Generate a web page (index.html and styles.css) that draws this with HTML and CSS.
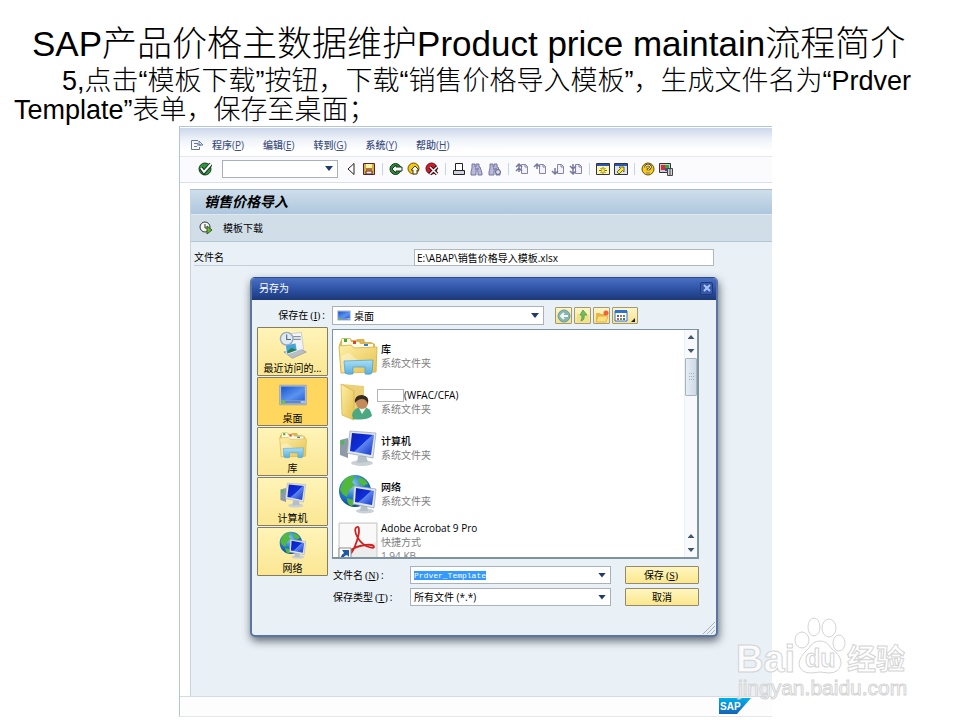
FILE: index.html
```html
<!DOCTYPE html>
<html lang="zh-CN">
<head>
    <meta charset="UTF-8">
    <meta name="viewport" content="width=device-width, initial-scale=1.0">
    <title>SAP产品价格主数据维护</title>
    <link rel="stylesheet" href="styles.css">
</head>
<body>
    <!-- shared icons -->
    <svg class="defs" width="0" height="0" aria-hidden="true">
        <defs>
            <linearGradient id="screen" x1="0" y1="0" x2="1" y2="1">
                <stop offset="0" stop-color="#0a1fb4"/><stop offset=".5" stop-color="#1030dc"/><stop offset=".52" stop-color="#5f86f0"/><stop offset="1" stop-color="#0f2fc8"/>
            </linearGradient>
            <linearGradient id="desk" x1="0" y1="0" x2="1" y2="1">
                <stop offset="0" stop-color="#1a55cc"/><stop offset=".6" stop-color="#5b93ee"/><stop offset="1" stop-color="#2a62d8"/>
            </linearGradient>
            <linearGradient id="folder" x1="0" y1="0" x2="1" y2="1">
                <stop offset="0" stop-color="#fdf0a8"/><stop offset="1" stop-color="#e6c04c"/>
            </linearGradient>
            <linearGradient id="glass" x1="0" y1="0" x2="0" y2="1">
                <stop offset="0" stop-color="#a9def5"/><stop offset="1" stop-color="#58aee0"/>
            </linearGradient>
            <radialGradient id="globe" cx=".4" cy=".3" r=".8">
                <stop offset="0" stop-color="#8fd0f8"/><stop offset=".5" stop-color="#2277cc"/><stop offset="1" stop-color="#0b3a86"/>
            </radialGradient>
            <linearGradient id="sapblue" x1="0" y1="0" x2="0" y2="1">
                <stop offset="0" stop-color="#00b0ea"/><stop offset="1" stop-color="#1463b8"/>
            </linearGradient>
        </defs>
        <symbol id="i-library" viewBox="0 0 40 40">
            <path d="M3 4l1-2h8l2 2h4l1-1h7l1 3h6l4 2v4l2 1-1 23-34 1L1 9z" fill="#d9b556"/>
            <path d="M4 3h8l1 3h8l1 2h13v6H4z" fill="#fffbe6"/>
            <path d="M6 3h3v3H6z" fill="#2fae3c"/><path d="M15 5h3v3h-3z" fill="#e0452c"/><path d="M26 8h4v2h-4z" fill="#2e7fd8"/>
            <path d="M1 10l12-1 3 3 23-1-1 25-35 1z" fill="url(#folder)" stroke="#dcbc5c"/>
            <path d="M3 20l8-3 10 8-9 11H4z" fill="#fff" opacity=".35"/>
            <path d="M6 25l29-1-1 13q-1 2-7 1v-7H15v7q-6 1-8-1z" fill="url(#glass)" stroke="#4b9ecb" stroke-width=".7"/>
        </symbol>
        <symbol id="i-user" viewBox="0 0 40 40">
            <path d="M4 2l22 2v30l-12 2z" fill="#ecd078"/>
            <path d="M3 2l13 7v29L4 33z" fill="url(#folder)" stroke="#d2ad48" stroke-width=".7"/>
            <path d="M14 33q2-8 10-8 9 0 10 9-6 5-19 3z" fill="#4ca880"/>
            <path d="M21 26l3 6 4-6z" fill="#eef6ee"/>
            <circle cx="24" cy="21" r="6" fill="#c48a5a"/>
            <path d="M17 21q-1-8 7-8 8 1 6 9-2-5-6-5-4 0-7 4z" fill="#332a22"/>
        </symbol>
        <symbol id="i-computer" viewBox="0 0 40 40">
            <ellipse cx="24" cy="35" rx="11" ry="3" fill="#c9d0d6"/>
            <path d="M2 12l8-2v20l-8-3z" fill="#8e9aa5"/><path d="M3 13l3-1v4l-3 1z" fill="#3bc052"/>
            <path d="M20 28h8l2 6-11 1z" fill="#b6bfc8"/>
            <path d="M12 3l26 2-3 25-26-5z" fill="#dde4ea" stroke="#98a3ae" stroke-width=".7"/>
            <path d="M14 5l22 2-3 20-21-4z" fill="url(#screen)"/>
        </symbol>
        <symbol id="i-network" viewBox="0 0 40 40">
            <circle cx="17" cy="17" r="16" fill="url(#globe)"/>
            <path d="M6 6q6-6 11-3l-3 5 3 3-6 5-2 7q-6-3-7-8zM21 3q7 2 9 7l-5 2-5-4zM9 24l6 2 1 5-3 1q-4-2-4-8z" fill="#51b83c"/>
            <ellipse cx="27" cy="37" rx="9" ry="2.500" fill="#c9d0d6"/>
            <path d="M23 31h6l1 6h-8z" fill="#b6bfc8"/>
            <path d="M16 12l22 3-2 19-21-4z" fill="#dde4ea" stroke="#98a3ae" stroke-width=".7"/>
            <path d="M18 14l18 3-2 14-17-3z" fill="url(#screen)"/>
        </symbol>
        <symbol id="i-desktop" viewBox="0 0 40 32">
            <path d="M1 2h38v28H1z" fill="#b8c6dc" stroke="#8795b0"/>
            <path d="M3 4h34v20H3z" fill="url(#desk)"/>
            <path d="M3 24h34v4H3z" fill="#5f86c8"/>
            <circle cx="6" cy="26" r="3" fill="#6cc04a"/><path d="M31 25h6v2h-6z" fill="#c4d8f4"/>
        </symbol>
        <symbol id="i-recent" viewBox="0 0 40 40">
            <path d="M7 30l20-6 12 6-20 9z" fill="#b9bec5" stroke="#8f979f"/>
            <path d="M14 4l18-2 3 24-17 4z" fill="#f1f3f6" stroke="#b9c1ca"/>
            <path d="M19 8h12M20 12h11" stroke="#8896a6" stroke-width="2"/>
            <path d="M9 20l15-3 2 11-15 5z" fill="#44a4dc" stroke="#fff"/><path d="M12 29l6-5 7 3-13 5z" fill="#2b7d4a"/>
            <circle cx="11" cy="11" r="9" fill="#dfe9f2" stroke="#97a8ba" stroke-width="2"/>
            <path d="M11 5v7h6" fill="none" stroke="#50657c" stroke-width="1.500"/>
        </symbol>
        <symbol id="i-acrobat" viewBox="0 0 40 40">
            <path d="M1 1h38v38H1z" fill="#ececec" stroke="#c8c8c8"/>
            <path d="M2 2h36v18L2 32z" fill="#fff" opacity=".7"/>
            <path d="M19 5q-3 1-1 7 3 8 10 12 7 3 8 1 0-3-9-2-8 1-14 5-4 3-2 4 3 0 6-8 4-10 4-15 0-5-2-4z" fill="none" stroke="#d2201f" stroke-width="1.800"/>
            <path d="M1 26h12v14H1z" fill="#fff" stroke="#8a8a8a"/>
            <path d="M4 28h7v7l-2-2q-4 1-4 5H3q-1-5 3-7z" fill="#1f5aa8"/>
        </symbol>
        <symbol id="i-bin" viewBox="0 0 14 14">
            <path d="M2 2h3v3h1V2h3v3h1l2 6v2H8V9H6v4H1v-3l1-4z" fill="#b9b8dc" stroke="#77779f"/><path d="M5 6h4v2H5z" fill="#8d8cb4"/>
        </symbol>
        <symbol id="i-page" viewBox="0 0 14 14">
            <path d="M6.500 2.500h4l2 2v7h-6z" fill="#f4f3fb" stroke="#8584ad"/><path d="M10 2v3h3" fill="none" stroke="#8584ad"/>
        </symbol>
    </svg>

    <main class="slide">
        <h1>SAP产品价格主数据维护Product price maintain流程简介</h1>
        <p class="step">5,点击“模板下载”按钮，下载“销售价格导入模板”，生成文件名为“Prdver Template”表单，保存至桌面；</p>

        <section class="sap">
            <nav class="menubar">
                <svg class="menu-icon" viewBox="0 0 14 12"><path d="M8 1.500H1.500v9h8V8M4 4.500h4M4 7.500h3M7 6h4" fill="none" stroke="#6376a0"/><path d="M9 2l4 4H9z" fill="none" stroke="#6376a0"/></svg>
                <a href="#">程序(<u>P</u>)</a>
                <a href="#">编辑(<u>E</u>)</a>
                <a href="#">转到(<u>G</u>)</a>
                <a href="#">系统(<u>Y</u>)</a>
                <a href="#">帮助(<u>H</u>)</a>
            </nav>

            <div class="toolbar">
                <button class="tool enter" aria-label="Enter"><svg viewBox="0 0 14 14"><circle cx="7" cy="7" r="6" fill="#2c9a3c" stroke="#163d1b"/><path d="M3 6l3 4 7-8" fill="none" stroke="#12301a" stroke-width="4"/><path d="M3 6l3 4 7-8" fill="none" stroke="#fff" stroke-width="2"/></svg></button>
                <div class="combo command">
                    <input type="text" aria-label="Command">
                    <button class="caret" aria-label="Open"></button>
                </div>
                <button class="tool" aria-label="Collapse"><svg viewBox="0 0 14 14"><path d="M10 1.500v11L4 7z" fill="#fff" stroke="#222"/></svg></button>
                <button class="tool" aria-label="Save"><svg viewBox="0 0 14 14"><path d="M1.500 1.500h11v11h-11z" fill="#d8a93c" stroke="#5a2330"/><path d="M4 2h6v4H4z" fill="#fff3a8"/><path d="M4 9h6v3H4z" fill="#f5f0ea" stroke="#5a2330"/><path d="M4 7h6" stroke="#9c3a34"/></svg></button>
                <span class="sep"></span>
                <button class="tool" aria-label="Back"><svg viewBox="0 0 14 14"><circle cx="6.500" cy="7" r="5.500" fill="#2b8c38" stroke="#14361a"/><path d="M3 7l4-4v2h6v4H7v2z" fill="#fff" stroke="#14361a"/></svg></button>
                <button class="tool" aria-label="Exit"><svg viewBox="0 0 14 14"><circle cx="6.500" cy="6.500" r="5.500" fill="#f3c90c" stroke="#6a520a"/><path d="M8 4l4 4h-2v4H6V8H4z" fill="#fff" stroke="#4a3b10"/></svg></button>
                <button class="tool" aria-label="Cancel"><svg viewBox="0 0 14 14"><circle cx="6.500" cy="6.500" r="5.500" fill="#d3192b" stroke="#5c0c14"/><path d="M5 5l7 7M12 5l-7 7" stroke="#3a0b10" stroke-width="3.500"/><path d="M5 5l7 7M12 5l-7 7" stroke="#fff" stroke-width="1.500"/></svg></button>
                <span class="sep"></span>
                <button class="tool" aria-label="Print"><svg viewBox="0 0 14 14"><path d="M3.500 1.500h7v7h-7z" fill="#fff" stroke="#222"/><path d="M1.500 8.500h11v4h-11z" fill="#cfd2dc" stroke="#222"/></svg></button>
                <button class="tool" aria-label="Find"><svg viewBox="0 0 14 14"><use href="#i-bin"/></svg></button>
                <button class="tool" aria-label="Find next"><svg viewBox="0 0 14 14"><use href="#i-bin"/><path d="M10 7v6M7 10h6" stroke="#77779f" stroke-width="3"/><path d="M10 8v4M8 10h4" stroke="#fff"/></svg></button>
                <span class="sep"></span>
                <button class="tool" aria-label="First page"><svg viewBox="0 0 14 14"><use href="#i-page"/><path d="M1 5l3-3 3 3M1 9l3-3 3 3M4 2v8" fill="none" stroke="#77779f" stroke-width="1.500"/></svg></button>
                <button class="tool" aria-label="Previous page"><svg viewBox="0 0 14 14"><use href="#i-page"/><path d="M1 5l3-3 3 3M4 2v5" fill="none" stroke="#77779f" stroke-width="1.500"/></svg></button>
                <button class="tool" aria-label="Next page"><svg viewBox="0 0 14 14"><use href="#i-page"/><path d="M1 9l3 3 3-3M4 6v6" fill="none" stroke="#77779f" stroke-width="1.500"/></svg></button>
                <button class="tool" aria-label="Last page"><svg viewBox="0 0 14 14"><use href="#i-page"/><path d="M1 4l3 3 3-3M1 9l3 3 3-3M4 2v10" fill="none" stroke="#77779f" stroke-width="1.500"/></svg></button>
                <span class="sep"></span>
                <button class="tool" aria-label="New session"><svg viewBox="0 0 14 14"><path d="M.500 1.500h13v11H.500z" fill="#fbf6b4" stroke="#333"/><path d="M1 2h12v2H1z" fill="#2a56b8"/><path d="M7 5v7M3 8.500h8M4.500 6l5 5M9.500 6l-5 5" stroke="#7a6d10"/><circle cx="7" cy="8.500" r="1.500" fill="#ffe92a"/></svg></button>
                <button class="tool" aria-label="Shortcut"><svg viewBox="0 0 14 14"><path d="M.500 1.500h13v11H.500z" fill="#dbe5f2" stroke="#333"/><path d="M1 2h12v2H1z" fill="#2a56b8"/><path d="M5 5h5v5L8.500 8.500 5 12l-2-2 3.500-3.500z" fill="#ffe92a" stroke="#4d460c" stroke-width=".8"/></svg></button>
                <span class="sep"></span>
                <button class="tool" aria-label="Help"><svg viewBox="0 0 14 14"><circle cx="7" cy="7" r="6" fill="#f6cb1c" stroke="#6a520a"/><path d="M4.500 5.500q0-2.500 2.500-2.500t2.500 2q0 1.500-2.500 2.500v1M7 10v2" fill="none" stroke="#5a4108" stroke-width="2.500"/><path d="M4.500 5.500q0-2.500 2.500-2.500t2.500 2q0 1.500-2.500 2.500v1M7 10v2" fill="none" stroke="#fff"/></svg></button>
                <button class="tool" aria-label="Layout"><svg viewBox="0 0 14 14"><path d="M.500 1.500h11v9H.500z" fill="#c9ccd2" stroke="#333"/><path d="M2 3h4v5H2z" fill="#e0262d"/><path d="M6 3h4v3H6z" fill="#2eaa3a"/><path d="M6 6h3v3H6z" fill="#2b50c0"/><path d="M8.500 6.500h5v7h-5z" fill="#d4d4d4" stroke="#444"/><path d="M10 8h2M10 10h2M10 12h2" stroke="#444"/></svg></button>
            </div>

            <div class="app">
                <h2>销售价格导入</h2>
                <div class="actions">
                    <button class="action">
                        <svg viewBox="0 0 14 14"><circle cx="6" cy="6" r="5" fill="#f4f6f2" stroke="#333"/><path d="M6 3v4h3" fill="none" stroke="#333"/><path d="M8 5l5 4-5 4z" fill="#6bb53a" stroke="#2f5a18"/></svg>
                        模板下载
                    </button>
                </div>

                <div class="content">
                    <div class="field">
                        <label for="path">文件名</label>
                        <input id="path" type="text" value="E:\ABAP\销售价格导入模板.xlsx">
                    </div>

                    <div class="dialog" role="dialog" aria-labelledby="dialog-title">
                        <div class="titlebar">
                            <span id="dialog-title">另存为</span>
                            <button class="close" aria-label="Close"><svg viewBox="0 0 8 8"><path d="M1 1l6 6M7 1L1 7" stroke="#a9c4ff" stroke-width="2"/></svg></button>
                        </div>

                        <div class="dialog-body">
                            <div class="lookin">
                                <label for="folder-select">保存在<span class="key">(<u>I</u>)</span>:</label>
                                <div class="combo">
                                    <svg class="combo-icon" viewBox="0 0 40 32"><use href="#i-desktop"/></svg>
                                    <select id="folder-select"><option>桌面</option></select>
                                    <span class="caret"></span>
                                </div>
                                <div class="nav-buttons">
                                    <button aria-label="Back"><svg viewBox="0 0 14 14"><circle cx="7" cy="7" r="6" fill="#86b4b0" stroke="#6d9a98"/><path d="M11 7H4M7 4L4 7l3 3" fill="none" stroke="#eef6f4" stroke-width="2"/></svg></button>
                                    <button aria-label="Up"><svg viewBox="0 0 14 14"><path d="M1 5h4l1 1h7v7H1z" fill="#f2df8a"/><path d="M5 12q4-1 3-6h3L7 1 4 6h2q0 4-1 6z" fill="#74c060" stroke="#4e9c46" stroke-width=".8"/></svg></button>
                                    <button aria-label="New folder"><svg viewBox="0 0 14 14"><path d="M1 4h4l1 1h5v7H1z" fill="#e8b84c"/><path d="M3 7h10l-2 6H1z" fill="#fbdf7c" stroke="#d8a33a" stroke-width=".7"/><circle cx="11" cy="4" r="2.500" fill="#f0603a"/></svg></button>
                                    <button class="views" aria-label="Views"><svg viewBox="0 0 22 14"><path d="M1 2h12v10H1z" fill="#fff" stroke="#2a72d4"/><path d="M1 1h12v3H1z" fill="#2a72d4"/><path d="M3 6h2v2H3zM9 9h2v2H9z" fill="#3a69c8"/><path d="M6 6h2v2H6zM3 9h2v2H3z" fill="#d85a4a"/><path d="M9 6h2v2H9zM6 9h2v2H6z" fill="#4aa04a"/><path d="M21 9v4h-4z" fill="#222"/></svg></button>
                                </div>
                            </div>

                            <div class="places">
                                <button><svg viewBox="0 0 40 40"><use href="#i-recent"/></svg>最近访问的...</button>
                                <button class="active"><svg viewBox="0 0 40 32"><use href="#i-desktop"/></svg>桌面</button>
                                <button><svg viewBox="0 0 40 40"><use href="#i-library"/></svg>库</button>
                                <button><svg viewBox="0 0 40 40"><use href="#i-computer"/></svg>计算机</button>
                                <button><svg viewBox="0 0 40 40"><use href="#i-network"/></svg>网络</button>
                            </div>

                            <div class="main">
                                <div class="listbox">
                                    <ul class="files">
                                        <li><svg viewBox="0 0 40 40"><use href="#i-library"/></svg><div><b>库</b><span>系统文件夹</span></div></li>
                                        <li><svg viewBox="0 0 40 40"><use href="#i-user"/></svg><div><b><i class="mask"></i>(WFAC/CFA)</b><span>系统文件夹</span></div></li>
                                        <li><svg viewBox="0 0 40 40"><use href="#i-computer"/></svg><div><b>计算机</b><span>系统文件夹</span></div></li>
                                        <li><svg viewBox="0 0 40 40"><use href="#i-network"/></svg><div><b>网络</b><span>系统文件夹</span></div></li>
                                        <li><svg viewBox="0 0 40 40"><use href="#i-acrobat"/></svg><div><b>Adobe Acrobat 9 Pro</b><span>快捷方式</span><span>1.94 KB</span></div></li>
                                    </ul>
                                    <div class="scrollbar">
                                        <span class="arrow up"></span>
                                        <span class="arrow down"></span>
                                        <span class="thumb"></span>
                                        <span class="arrow up end"></span>
                                        <span class="arrow down"></span>
                                    </div>
                                </div>

                                <div class="save-form">
                                    <label for="filename">文件名<span class="key">(<u>N</u>)</span>:</label>
                                    <div class="combo">
                                        <input id="filename" type="text" value="Prdver_Template">
                                        <button class="caret" aria-label="Open"></button>
                                    </div>
                                    <button class="btn">保存<span class="key">(<u>S</u>)</span></button>
                                    <label for="filetype">保存类型<span class="key">(<u>T</u>)</span>:</label>
                                    <div class="combo">
                                        <select id="filetype"><option>所有文件 (*.*)</option></select>
                                        <span class="caret"></span>
                                    </div>
                                    <button class="btn">取消</button>
                                </div>
                            </div>
                        </div>
                        <svg class="grip" viewBox="0 0 12 12"><path d="M0 12L12 0M4 12l8-8M8 12l4-4" stroke="#a4b2c2"/></svg>
                    </div>
                </div>
            </div>

            <footer class="statusbar">
                <svg class="sap-logo" viewBox="0 0 32 16"><path d="M0 0h32L18 16H0z" fill="url(#sapblue)"/><text x="1" y="12">SAP</text></svg>
            </footer>
        </section>

        <svg class="watermark" viewBox="0 0 176 88" aria-hidden="true">
            <text class="big" x="1" y="56">Bai</text>
            <ellipse cx="67" cy="24" rx="7" ry="8"/>
            <ellipse cx="79" cy="11" rx="6" ry="9"/>
            <ellipse cx="94" cy="12" rx="7" ry="9"/>
            <ellipse cx="104" cy="27" rx="6" ry="8"/>
            <path d="M85 25q7 0 11 7 11 8 10 16-2 9-12 9-9-2-18 0-11 0-12-9 0-7 10-16 4-7 11-7z"/>
            <text class="du" x="70" y="51">du</text>
            <text class="cjk" x="112" y="54">经验</text>
            <text class="url" x="3" y="79">jingyan.baidu.com</text>
        </svg>
    </main>

    <script>
        // the suggested name starts out selected, ready to be typed over
        const filename = document.getElementById("filename");
        filename.focus();
        filename.select();
    </script>
</body>
</html>
```
FILE: styles.css
```css
* {
    box-sizing: border-box;
}
body {
    margin: 0;
    background: #fff;
    color: #000;
    font-family: "Liberation Sans", "Noto Sans CJK SC", sans-serif;
}
.defs {
    position: absolute;
}
.slide {
    position: relative;
    min-height: 100vh;
    padding: 24px 0 4px;
}
h1 {
    margin: 0 0 3px;
    padding-left: 32px;
    font-size: 35px;
    line-height: 40px;
    font-weight: 300;
}
.step {
    margin: 0 40px 1px 14px;
    font-size: 27px;
    line-height: 29px;
    font-weight: 300;
    text-indent: 48px;
}

/* SAP window */
.sap {
    margin: 0 188px 0 179px;
    border: 1px solid #b3c5dd;
    border-right: 0;
    border-bottom-color: #e4e8ec;
    font-family: "Open Sans", "Noto Sans CJK SC", sans-serif;
    font-size: 10px;
    line-height: 14px;
}
.sap button,
.sap input,
.sap select {
    margin: 0;
    padding: 0;
    border: 0;
    outline: 0;
    border-radius: 0;
    background: none;
    font: inherit;
    color: inherit;
    appearance: none;
}
.sap svg {
    display: block;
    flex: none;
}
.menubar {
    display: flex;
    align-items: center;
    gap: 19px;
    height: 30px;
    padding: 6px 10px 0;
    border-top: 1px solid #fff;
    border-bottom: 1px solid #e3e8f0;
    background: linear-gradient(#ccd7ea, #eef2f8 40%, #fff 80%);
}
.menubar a {
    color: #3c4f80;
    font-weight: 500;
    text-decoration: none;
}
.menubar .menu-icon {
    width: 14px;
    height: 12px;
    margin-right: -11px;
}
.toolbar {
    display: flex;
    align-items: center;
    gap: 4px;
    height: 26px;
    padding: 0 18px 2px;
    border-bottom: 1px solid #d9e0ea;
    background: #fbfbfd;
}
.tool,
.tool svg {
    width: 14px;
    height: 14px;
}
.sep {
    width: 5px;
    height: 12px;
    background: linear-gradient(#c2d6e4, #c2d6e4) center / 1px 100% no-repeat;
}
.combo {
    display: flex;
    align-items: center;
    height: 18px;
    border: 1px solid #a9b2ba;
    background: #fff;
}
.combo input,
.combo select {
    flex: 1;
    min-width: 0;
    height: 16px;
    padding-left: 3px;
}
.combo .caret {
    width: 8px;
    height: 5px;
    margin-right: 4px;
    background: #1f3a6c;
    clip-path: polygon(0 0, 100% 0, 50% 100%);
    pointer-events: none;
}
.command {
    width: 116px;
    margin: 0 2px 0 6px;
}
.app {
    margin: 6px 0 0 10px;
    border-top: 1px solid #a9b9cc;
    border-left: 1px solid #c8d4e0;
}
h2 {
    margin: 0;
    padding-left: 13px;
    font-size: 14px;
    line-height: 24px;
    font-style: italic;
    font-weight: bold;
    border-bottom: 1px solid #dfe9f1;
    background: linear-gradient(#cedeeb, #aec7dd);
}
.actions {
    height: 27px;
    padding: 6px 8px;
    border-bottom: 1px solid #b3c4d2;
    background: #d1dee8;
}
.action {
    display: flex;
    align-items: center;
    gap: 10px;
}
.action svg {
    width: 14px;
    height: 14px;
}
.content {
    padding: 7px 54px 59px 3px;
    background: #e9f0f6;
}
.field {
    display: flex;
    align-items: center;
    margin-right: 4px;
}
.field label {
    flex: 1;
    height: 16px;
    border-bottom: 1px solid #c3ced8;
}
.field input {
    width: 300px;
    height: 17px;
    padding-left: 2px;
    border: 1px solid #b0b7bd;
    background: #fff;
}

/* save dialog */
.dialog {
    position: relative;
    margin: 11px 0 0 56px;
    border: 2px solid #5a74a4;
    border-top: 1px solid #2c4a8c;
    border-radius: 5px;
    background: #e9f0f6;
    box-shadow: 1px 4px 8px rgba(40, 50, 60, 0.7);
}
.titlebar {
    display: flex;
    align-items: center;
    justify-content: space-between;
    height: 22px;
    padding: 0 3px 2px 7px;
    border-radius: 3px 3px 0 0;
    background: linear-gradient(#4a70c4, #2a4d9e 60%, #1c3878);
    color: #fff;
}
.sap .close {
    display: grid;
    place-items: center;
    width: 13px;
    height: 13px;
    border: 1px solid #1c3a82;
    border-radius: 2px;
    background: #3658a6;
}
.close svg {
    width: 8px;
    height: 8px;
}
.dialog-body {
    display: grid;
    grid-template-columns: 71px 1fr;
    column-gap: 4px;
    row-gap: 2px;
    padding: 6px 17px 29px 5px;
}
.lookin {
    grid-column: 1 / -1;
    display: flex;
    align-items: center;
    height: 19px;
}
.lookin label {
    width: 75px;
    padding-right: 7px;
    text-align: right;
    white-space: nowrap;
}
.lookin .combo {
    flex: 1;
    height: 19px;
}
.combo-icon {
    width: 14px;
    height: 11px;
    margin-left: 4px;
}
.key {
    margin: 0 2px;
    font-family: "Liberation Serif", serif;
}
.nav-buttons {
    display: flex;
    gap: 2px;
    margin: 0 61px 0 11px;
}
.sap .nav-buttons button {
    display: grid;
    place-items: center;
    width: 17px;
    height: 17px;
    border: 1px solid #a39a74;
    border-radius: 1px;
    background: linear-gradient(#fdf6c4, #f5e394);
}
.sap .nav-buttons .views {
    width: 26px;
}
.nav-buttons svg {
    height: 14px;
}
.places {
    display: flex;
    flex-direction: column;
    gap: 1px;
}
.sap .places button {
    display: flex;
    flex-direction: column;
    align-items: center;
    justify-content: space-between;
    height: 49px;
    padding: 3px 0 0;
    border: 1px solid #857d5c;
    border-radius: 1px;
    background: linear-gradient(#fff4b8, #fbe793);
    white-space: nowrap;
}
.sap .places .active {
    background: #ffd65e;
}
.places svg {
    width: 28px;
    height: 28px;
}
.main {
    display: flex;
    flex-direction: column;
    gap: 7px;
    padding-top: 2px;
}
.listbox {
    display: flex;
    height: 230px;
    border: 1px solid #7d939f;
    border-width: 1px 2px 2px 1px;
    background: #fff;
    overflow: hidden;
}
.files {
    flex: 1;
    margin: 0;
    padding: 3px 0 0 5px;
    list-style: none;
}
.files li {
    display: flex;
    align-items: center;
    gap: 3px;
    height: 46px;
}
.files li:last-child {
    height: 50px;
}
.files svg {
    width: 40px;
    height: 40px;
}
.files b,
.files span {
    display: block;
    line-height: 14px;
    white-space: nowrap;
}
.files b {
    font-weight: 500;
}
.files span {
    color: #808080;
}
.mask {
    display: inline-block;
    width: 27px;
    height: 13px;
    margin-left: -4px;
    border: 1px solid #b4b4b4;
    background: #fff;
    vertical-align: middle;
}
.scrollbar {
    display: flex;
    flex-direction: column;
    align-items: center;
    width: 13px;
    border-left: 1px solid #eceff2;
    background: #f8f9fc;
}
.arrow {
    display: grid;
    place-items: center;
    width: 12px;
    height: 14px;
}
.arrow::before {
    content: "";
    width: 7px;
    height: 4px;
    background: #44566a;
}
.up::before {
    clip-path: polygon(50% 0, 100% 100%, 0 100%);
}
.down::before {
    clip-path: polygon(0 0, 100% 0, 50% 100%);
}
.end {
    margin-top: auto;
}
.thumb {
    display: grid;
    place-items: center;
    width: 12px;
    height: 38px;
    border: 1px solid #a8b4c0;
    border-radius: 1px;
    background: linear-gradient(90deg, #e6edf4, #cfdae6);
}
.thumb::before {
    content: "";
    width: 6px;
    height: 9px;
    background: conic-gradient(#a3b0be 25%, transparent 0) 0 0 / 2px 3px;
}
.save-form {
    display: grid;
    grid-template-columns: 78px 1fr 74px;
    row-gap: 4px;
    align-items: center;
}
.save-form label {
    padding-left: 1px;
    white-space: nowrap;
}
.save-form .combo {
    margin-right: 14px;
}
.save-form input {
    font-family: "Liberation Mono", monospace;
    font-size: 8px;
}
.save-form input::selection {
    background: #3399ff;
    color: #fff;
}
.sap .btn {
    height: 18px;
    border: 1px solid #94896a;
    border-radius: 1px;
    background: linear-gradient(#fff6c0, #fbe78c);
}
.grip {
    position: absolute;
    right: 1px;
    bottom: 1px;
    width: 12px;
    height: 12px;
}
.statusbar {
    display: flex;
    justify-content: flex-end;
    height: 20px;
    padding: 1px 21px;
    border-top: 1px solid #d5dbe2;
    background: #fdfdfd;
}
.sap-logo {
    width: 32px;
    height: 16px;
}
.sap-logo text {
    fill: #fff;
    font: bold 10px "Liberation Sans", sans-serif;
}

/* site mark in the corner */
.watermark {
    position: absolute;
    right: 49px;
    bottom: 17px;
    width: 176px;
    height: 88px;
    fill: #fff;
    fill-opacity: 0.8;
    stroke: #d4d4d4;
    stroke-width: 1;
}
.watermark .big {
    font: bold 38px "Liberation Sans", sans-serif;
}
.watermark .du {
    font: bold 25px "Liberation Sans", sans-serif;
}
.watermark .cjk {
    font: bold 29px "Noto Sans CJK SC", sans-serif;
}
.watermark .url {
    font: 21px "Liberation Sans", sans-serif;
}
```
